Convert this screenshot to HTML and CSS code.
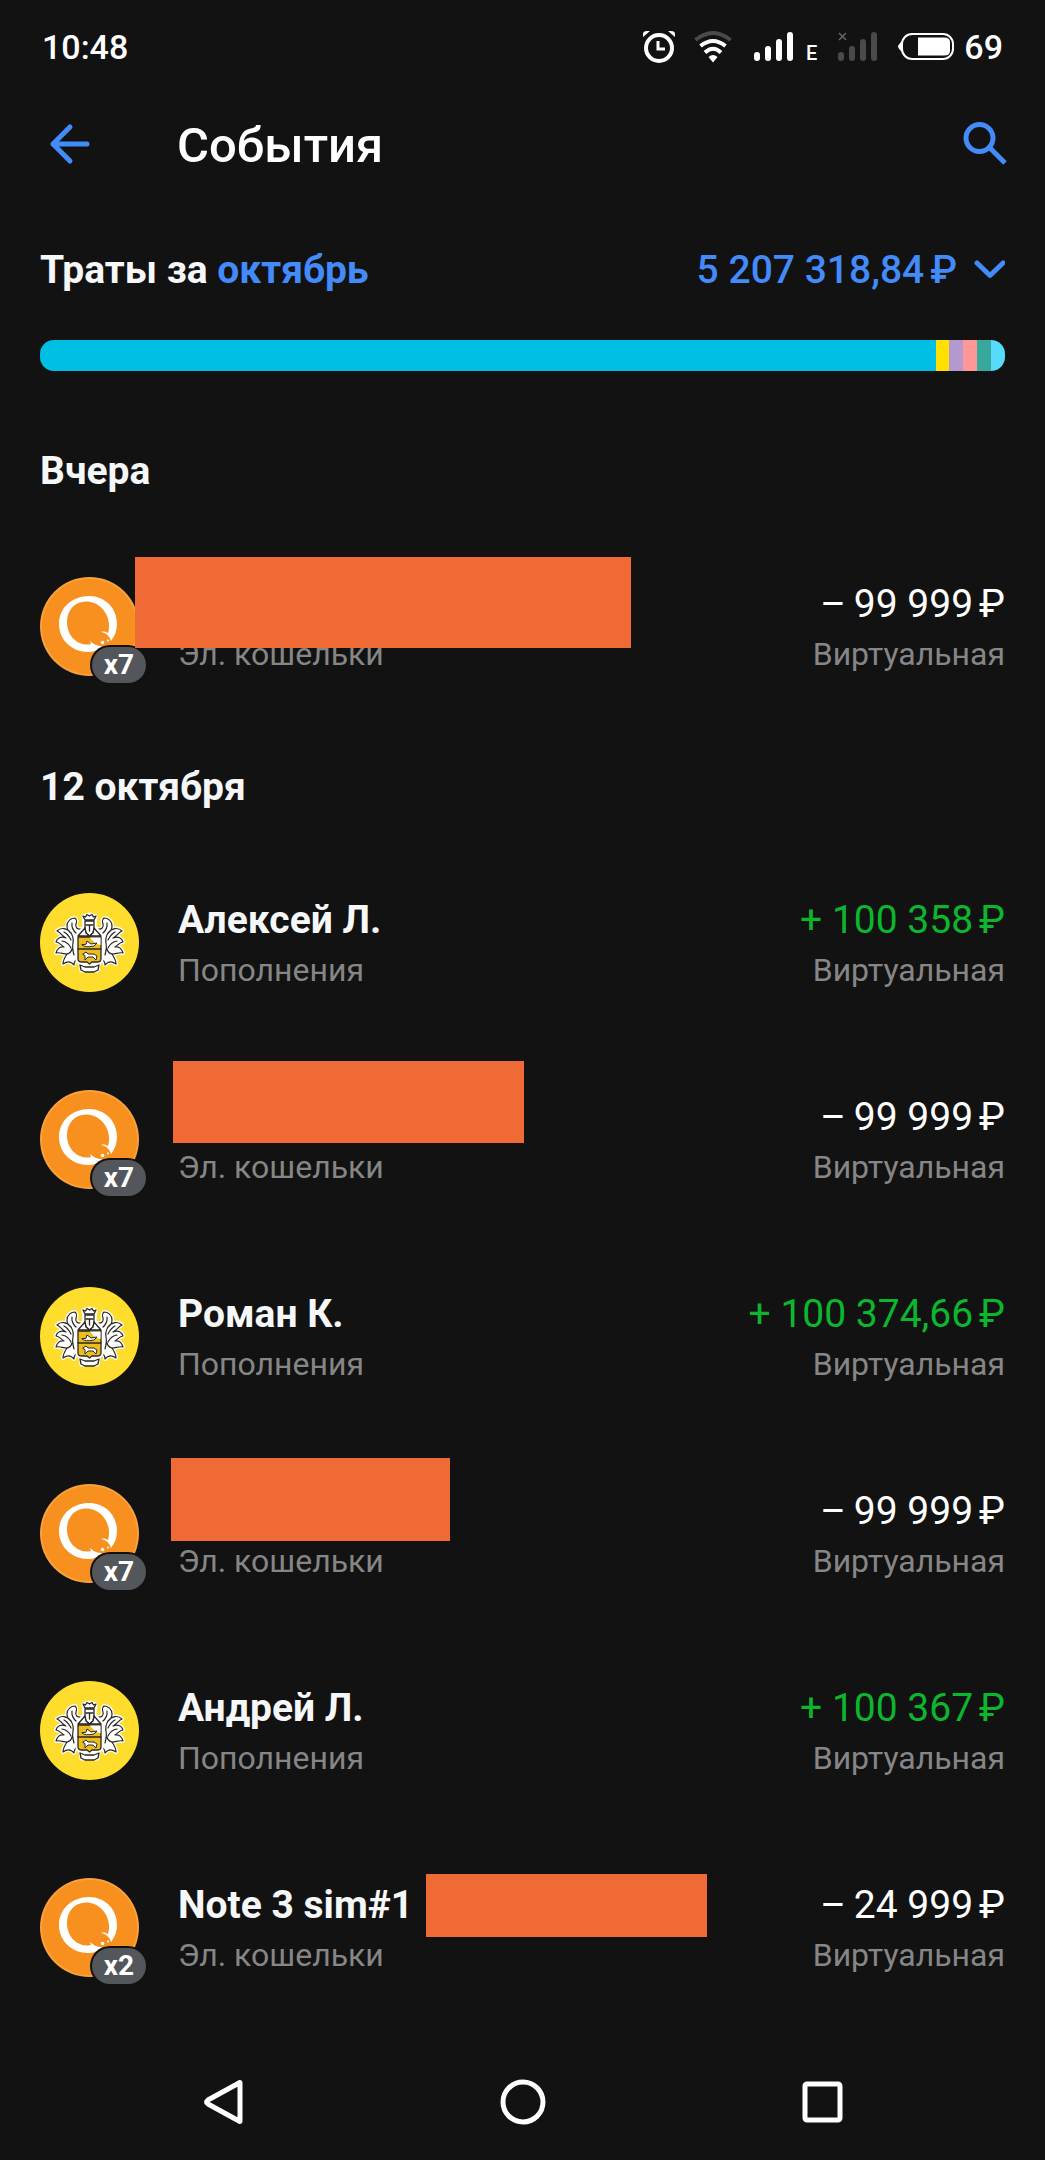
FILE: index.html
```html
<!DOCTYPE html>
<html lang="ru">
<head>
<meta charset="utf-8">
<meta name="viewport" content="width=device-width, initial-scale=1">
<title>События</title>
<link rel="stylesheet" href="styles.css">
</head>
<body>
<svg class="sprite" aria-hidden="true">
  <symbol id="qiwi" viewBox="0 0 99 99">
    <circle cx="49.500" cy="49.500" r="49.500" fill="#f9a13c"/>
    <circle cx="49.500" cy="49.500" r="47.500" fill="#f7901e"/>
    <path fill="#fff" fill-rule="evenodd" d="M49 19C65 19 77 31 77 47C77 53 75 59 71 64C70 60 67 56 61 55C64 54 66 55 68 56C69 53 69 50 69 47C68 34 58 24.500 46 24.500C35 24.500 27 33 27 45C27 58 36 67 46 67.500C48 67.500 50 67.500 51 67L50 64C53 67 57 69 62 69C58 73 54 75 48 75C32 75 19 63 19 47C19 31 32 19 49 19Z"/>
    <circle cx="62.500" cy="65.500" r="1.800" fill="#fff"/><circle cx="68" cy="63.500" r="1" fill="#fff"/>
  </symbol>
  <symbol id="plume" viewBox="0 0 99 99">
    <g fill="#fff" stroke-linejoin="round" stroke-linecap="round">
      <path stroke="#fff" stroke-width="4" d="M42 36C37 37 35 34 36 31C37 28 37 27 35 25C31 25 27 28 27 33C27 36 28 38 31 40C27 35 21 34 17 38C20 39 22 43 26 45C21 43 17 45 16 49C19 49 21 52 24 54C20 53 17 56 16 60C20 59 23 61 27 61C25 64 23 67 23 71C27 68 31 68 34 72C34 69 35 67 38 66V43Z"/>
      <path stroke="#2b2722" stroke-width="1.200" d="M42 36C37 37 35 34 36 31C37 28 37 27 35 25C31 25 27 28 27 33C27 36 28 38 31 40C27 35 21 34 17 38C20 39 22 43 26 45C21 43 17 45 16 49C19 49 21 52 24 54C20 53 17 56 16 60C20 59 23 61 27 61C25 64 23 67 23 71C27 68 31 68 34 72C34 69 35 67 38 66V43Z"/>
      <path fill="none" stroke="#2b2722" stroke-width="1.200" d="M31 40Q34 45 33 50T34 62M24 39Q28 41 31 47M22 48Q28 49 31 55M27 61Q31 60 32 56M32 30Q31 36 37 41"/>
    </g>
  </symbol>
  <symbol id="crest" viewBox="0 0 99 99">
    <circle cx="49.500" cy="49.500" r="49.500" fill="#ffdd2d"/>
    <use href="#plume" width="99" height="99"/>
    <use href="#plume" width="99" height="99" transform="translate(99 0) scale(-1 1)"/>
    <path fill="#fff" stroke="#fff" stroke-width="3" stroke-linejoin="round" d="M43 23L49.500 21L56 23L55 34L62 42V67L59 71L58 78H41L40 71L37 67V42L44 34Z"/>
    <g fill="#fff" stroke="#2b2722" stroke-width="1.300" stroke-linejoin="round" stroke-linecap="round">
      <path d="M43 23L45.500 24L47 21.500L49.500 23L52 21.500L53.500 24L56 23L54 27H45Z"/>
      <path d="M45 28H54V36L53 40L49.500 43L46 40L45 36Z"/>
      <path d="M45 35L38 43H61L54 35L53 40L49.500 43L46 40Z"/>
      <path fill="#edbd1d" d="M38 44H61V66Q61 69 57 69H52L49.500 71L47 69H42Q38 69 38 66Z"/>
      <path d="M50 44.500H60.500V52Q54 51 50 44.500Z" stroke="none"/>
      <path fill="none" d="M38 56H61M46 32H53M49.500 32V38"/>
      <path d="M42 52Q45 55 54 53L57 50L51 51L47 48L46 51Z" stroke-width="1"/>
      <path d="M43 61L46 59L48 61H54L57 63L56 67L53 64L48 64L45 67L45 63Z" stroke-width="1"/>
      <path d="M40 72L45 74H54L59 72L58 77L54 79H45L41 77Z"/>
    </g>
  </symbol>
</svg>

<div class="screen">
  <div class="status">
    <span class="status-text">10:48</span>
    <div class="status-icons">
      <svg width="34" height="32" viewBox="0 0 34 32" aria-label="Будильник"><g fill="none" stroke="#fff"><circle cx="17" cy="17" r="13" stroke-width="4"/><path d="M16 10V18H23" stroke-width="3"/></g><path fill="#fff" d="M1 6V3Q1 0 5 0H8ZM33 6V3Q33 0 29 0H26Z"/></svg>
      <svg class="wifi" width="38" height="32" viewBox="0 0 38 32" aria-label="Wi-Fi"><g fill="none" stroke="#fff" stroke-width="4"><path d="M1.500 9Q19 -5 36.500 9" stroke="#4a4a4a"/><path d="M6.500 15Q19 5 31.500 15"/><path d="M11 21.500Q19 14 27 21.500"/></g><path fill="#fff" d="M14.500 26Q19 22 23.500 26L19 31.500Z"/></svg>
      <svg class="signal" width="40" height="32" viewBox="0 0 40 32" aria-label="Сигнал"><g fill="#fff"><rect y="21" width="6" height="9" rx="3"/><rect x="11" y="15" width="6" height="15" rx="3"/><rect x="22" y="8" width="6" height="22" rx="3"/><rect x="33" y="1" width="6" height="29" rx="3"/></g></svg>
      <span class="network">E</span>
      <svg class="signal-off" width="40" height="32" viewBox="0 0 40 32" aria-label="Нет сигнала"><g fill="#4a4a4a"><rect y="21" width="6" height="9" rx="3"/><rect x="11" y="15" width="6" height="15" rx="3"/><rect x="22" y="8" width="6" height="22" rx="3"/><rect x="33" y="1" width="6" height="29" rx="3"/></g><path d="M1 2L8 9M8 2L1 9" stroke="#666" stroke-width="1.500"/></svg>
      <svg class="battery" width="56" height="32" viewBox="0 0 56 32" aria-label="Батарея"><rect x="4" y="3" width="51" height="25" rx="10" fill="none" stroke="#fff" stroke-width="2"/><path fill="#fff" d="M4 10V21Q0 17 0 15.500Q0 14 4 10Z"/><path fill="#fff" d="M20 6.500H46Q52 6.500 52 11V20Q52 24.500 46 24.500H20Z"/></svg>
      <span class="status-text">69</span>
    </div>
  </div>

  <header class="topbar">
    <button class="icon-button" aria-label="Назад"><svg width="42" height="42" viewBox="0 0 42 42"><path d="M39 21H5M22 4L5 21L22 38" fill="none" stroke="#428bf9" stroke-width="5" stroke-linecap="round" stroke-linejoin="round"/></svg></button>
    <h1 class="title">События</h1>
    <button class="icon-button" aria-label="Поиск"><svg width="44" height="44" viewBox="0 0 44 44"><g fill="none" stroke="#428bf9" stroke-width="5"><circle cx="16.500" cy="16" r="13.500"/><path d="M27 26L42 41"/></g></svg></button>
  </header>

  <main>
    <section class="spend">
      <div class="spend-line">
        <h2 class="heading">Траты за <a class="month" href="#month">октябрь</a></h2>
        <button class="total">5 207 318,84<span class="rub">₽</span><svg class="chevron" width="32" height="20" viewBox="0 0 32 20"><path d="M4 3L17 15.500L30 3" fill="none" stroke="#428bf9" stroke-width="5" stroke-linecap="round" stroke-linejoin="round"/></svg></button>
      </div>
      <div class="bar">
        <span class="part cyan"></span><span class="part yellow" style="width:1.44%"></span><span class="part purple" style="width:1.44%"></span><span class="part pink" style="width:1.44%"></span><span class="part teal" style="width:1.44%"></span><span class="part sky" style="width:1.44%"></span>
      </div>
    </section>

    <section>
      <h2 class="heading day">Вчера</h2>
      <ul class="list">
        <li class="row">
          <div class="avatar"><svg class="logo"><use href="#qiwi"/></svg><span class="badge">x7</span></div>
          <div class="info"><div class="name"></div><div class="sub">Эл. кошельки</div></div>
          <div class="sum"><div class="amount">–&thinsp;99 999<span class="rub">₽</span></div><div class="sub">Виртуальная</div></div>
          <span class="cover cover-wide"></span>
        </li>
      </ul>
    </section>

    <section>
      <h2 class="heading day">12 октября</h2>
      <ul class="list">
        <li class="row">
          <div class="avatar"><svg class="logo"><use href="#crest"/></svg></div>
          <div class="info"><div class="name">Алексей Л.</div><div class="sub">Пополнения</div></div>
          <div class="sum"><div class="amount income">+ 100 358<span class="rub">₽</span></div><div class="sub">Виртуальная</div></div>
        </li>
        <li class="row">
          <div class="avatar"><svg class="logo"><use href="#qiwi"/></svg><span class="badge">x7</span></div>
          <div class="info"><div class="name"></div><div class="sub">Эл. кошельки</div></div>
          <div class="sum"><div class="amount">–&thinsp;99 999<span class="rub">₽</span></div><div class="sub">Виртуальная</div></div>
          <span class="cover cover-medium"></span>
        </li>
        <li class="row">
          <div class="avatar"><svg class="logo"><use href="#crest"/></svg></div>
          <div class="info"><div class="name">Роман К.</div><div class="sub">Пополнения</div></div>
          <div class="sum"><div class="amount income">+ 100 374,66<span class="rub">₽</span></div><div class="sub">Виртуальная</div></div>
        </li>
        <li class="row">
          <div class="avatar"><svg class="logo"><use href="#qiwi"/></svg><span class="badge">x7</span></div>
          <div class="info"><div class="name"></div><div class="sub">Эл. кошельки</div></div>
          <div class="sum"><div class="amount">–&thinsp;99 999<span class="rub">₽</span></div><div class="sub">Виртуальная</div></div>
          <span class="cover cover-small"></span>
        </li>
        <li class="row">
          <div class="avatar"><svg class="logo"><use href="#crest"/></svg></div>
          <div class="info"><div class="name">Андрей Л.</div><div class="sub">Пополнения</div></div>
          <div class="sum"><div class="amount income">+ 100 367<span class="rub">₽</span></div><div class="sub">Виртуальная</div></div>
        </li>
        <li class="row">
          <div class="avatar"><svg class="logo"><use href="#qiwi"/></svg><span class="badge">x2</span></div>
          <div class="info"><div class="name">Note 3 sim#1</div><div class="sub">Эл. кошельки</div></div>
          <div class="sum"><div class="amount">–&thinsp;24 999<span class="rub">₽</span></div><div class="sub">Виртуальная</div></div>
          <span class="cover cover-tail"></span>
        </li>
      </ul>
    </section>
  </main>

  <nav class="sysnav">
    <button class="nav-button" aria-label="Назад"><svg width="46" height="46" viewBox="0 0 46 46"><path d="M40 4V42Q40 43 39 42L8 25Q5 23 8 21L39 4Q40 3 40 4Z" fill="none" stroke="#fff" stroke-width="5" stroke-linejoin="round"/></svg></button>
    <button class="nav-button" aria-label="Домой"><svg width="46" height="46" viewBox="0 0 46 46"><circle cx="23" cy="23" r="20" fill="none" stroke="#fff" stroke-width="5"/></svg></button>
    <button class="nav-button" aria-label="Недавние"><svg width="46" height="46" viewBox="0 0 46 46"><rect x="6" y="5" width="35" height="36" rx="2" fill="none" stroke="#fff" stroke-width="5"/></svg></button>
  </nav>
</div>
</body>
</html>
```
FILE: styles.css
```css
* { box-sizing: border-box; }

body {
  margin: 0;
  background: #121212;
  color: #f6f7f8;
  font-family: Roboto, "Liberation Sans", sans-serif;
}

h1, h2, ul { margin: 0; padding: 0; }
ul { list-style: none; }
svg { display: block; flex: none; }

button {
  padding: 0;
  border: 0;
  background: none;
  color: inherit;
  font: inherit;
  cursor: pointer;
}

.sprite { position: absolute; width: 0; height: 0; }

.screen {
  display: flex;
  flex-direction: column;
  min-height: 100vh;
}

/* Status bar */
.status {
  display: flex;
  align-items: center;
  justify-content: space-between;
  height: 92px;
  padding: 2px 42px 0;
}
.status-icons { display: flex; align-items: center; }
.status-text {
  color: #fff;
  font-size: 34px;
  font-weight: 500;
  line-height: 44px;
}
.wifi { margin-left: 18px; }
.signal { margin-left: 22px; }
.network {
  align-self: flex-end;
  margin-left: 12px;
  color: #fff;
  font-size: 20px;
  font-weight: 500;
  line-height: 24px;
  padding-bottom: 4px;
}
.signal-off { margin-left: 21px; }
.battery { margin: 0 10px 0 20px; }

/* App bar */
.topbar {
  display: flex;
  align-items: center;
  height: 104px;
  padding: 0 38px 0 48px;
}
.title {
  flex: 1;
  margin-left: 87px;
  padding-top: 4px;
  color: #fff;
  font-size: 49px;
  font-weight: 500;
  line-height: 60px;
}

/* Monthly spend */
.spend { padding: 50px 40px 38px; }
.spend-line {
  display: flex;
  align-items: center;
  justify-content: space-between;
  margin-bottom: 46px;
}
.heading {
  font-size: 39px;
  font-weight: 700;
  line-height: 48px;
}
.month { color: #428bf9; text-decoration: none; }
.total {
  display: flex;
  align-items: center;
  color: #428bf9;
  font-size: 39px;
  font-weight: 500;
  line-height: 48px;
}
.rub { margin-left: 6px; }
.chevron { margin-left: 16px; }
.bar {
  display: flex;
  height: 31px;
  border-radius: 14px;
  overflow: hidden;
}
.cyan { flex: 1; background: #00bfe4; }
.yellow { background: #ffe000; }
.purple { background: #b498d0; }
.pink { background: #ff9797; }
.teal { background: #36a89c; }
.sky { background: #56dcfa; }

/* Operations */
.day { padding: 38px 40px 33px; }
.row {
  position: relative;
  display: flex;
  align-items: center;
  height: 197px;
  padding: 0 40px;
}
.avatar {
  position: relative;
  flex: none;
  width: 99px;
  height: 99px;
  margin-right: 39px;
}
.logo { width: 99px; height: 99px; }
.badge {
  position: absolute;
  left: 52px;
  top: 70px;
  width: 54px;
  height: 36px;
  border-radius: 18px;
  box-shadow: 0 0 0 2px #121212;
  background: #53565b;
  color: #fff;
  font-size: 28px;
  font-weight: 700;
  line-height: 36px;
  text-align: center;
}
.info { flex: 1; min-width: 0; }
.sum { text-align: right; }
.name, .amount {
  min-height: 48px;
  margin-bottom: 6px;
  font-size: 39px;
  line-height: 48px;
}
.name { font-weight: 700; }
.amount { color: #fff; }
.income { color: #0cb62e; }
.sub {
  color: #868686;
  font-size: 32px;
  line-height: 40px;
}

.cover { position: absolute; background: #f06a35; }
.cover-wide { left: 135px; top: 29px; width: 496px; height: 91px; }
.cover-medium { left: 173px; top: 20px; width: 351px; height: 82px; }
.cover-small { left: 171px; top: 23px; width: 279px; height: 83px; }
.cover-tail { left: 426px; top: 45px; width: 281px; height: 63px; }

/* System navigation */
.sysnav {
  display: flex;
  height: 116px;
  margin-top: auto;
  padding: 0 7%;
}
.nav-button {
  display: flex;
  flex: 1;
  align-items: center;
  justify-content: center;
}
```
